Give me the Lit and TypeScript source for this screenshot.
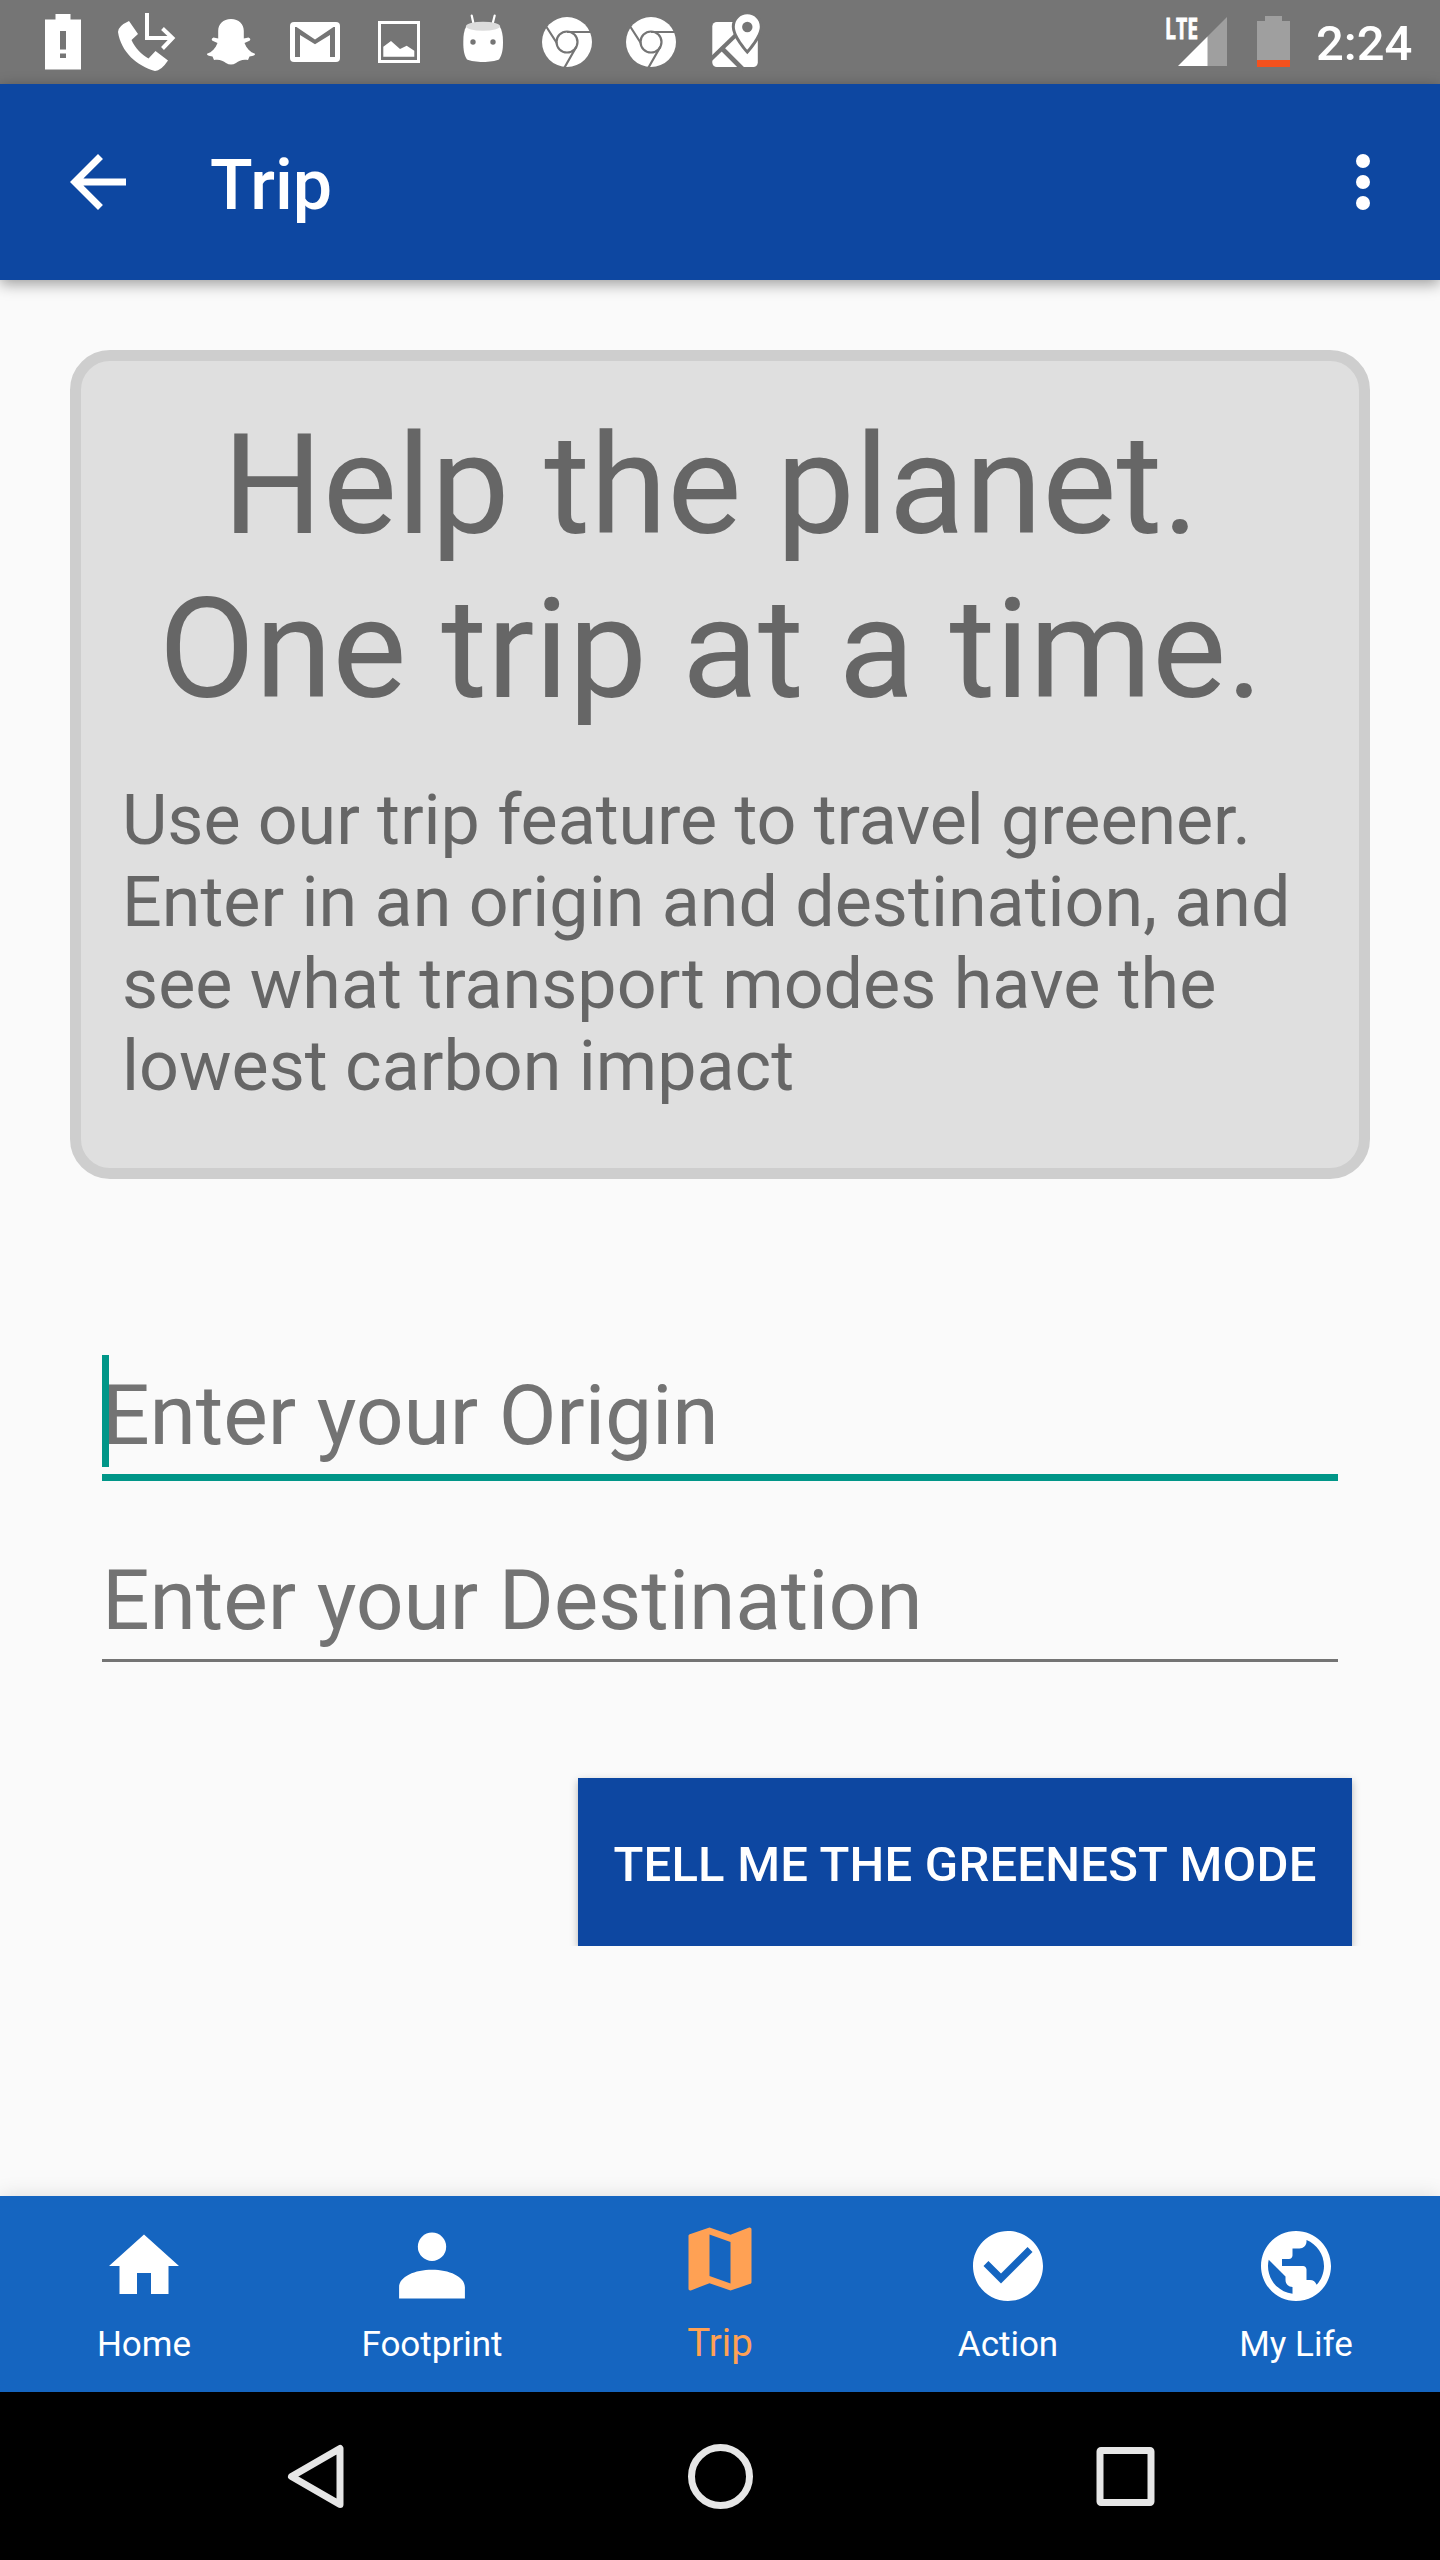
import { LitElement, html, css, svg } from "lit";
import { customElement, property } from "lit/decorators.js";
import { classMap } from "lit/directives/class-map.js";

const statusIcons = [
  svg`<path fill="#fff" d="M24 19.500h10.500V14h15v5.500H60v50H24z"/><path fill="#757575" d="M39 31h6v18.500h-6zM39 53.500h6V58h-6z"/>`,
  svg`<path fill="#fff" d="M24 21Q13 26 13 32C16 52 32 66 50 71Q56 71 63 60.500L50.500 51 43.500 58.500C37 55 30 48 26.500 40L33 34z"/><path fill="none" stroke="#fff" stroke-width="4" d="M42 13v25h25M57.500 28.500L67.500 38 57.500 48.500"/>`,
  svg`<path fill="#fff" d="M42 19C50 19 54.800 24 54.800 31V38.500L59.500 37.500Q62.500 39 60.500 40.800L55.500 43C57.500 48.500 61 52 66 53.800Q66.500 55.800 60.500 56.500L59 60C54 59 50 60.500 47 63Q42 66 37 63C34 60.500 30 59 25 60L23.500 56.500Q17.500 55.800 18 53.800C23 52 26.500 48.500 28.500 43L23.500 40.800Q21.500 39 24.500 37.500L29.200 38.500V31C29.200 24 34 19 42 19z"/>`,
  svg`<rect x="17" y="22" width="50" height="40" rx="4" fill="#fff"/><path fill="#757575" d="M22 57V27h1.500L42 39.500 60.500 27H62v30h-5V35L42 44.300 27 35v22z"/>`,
  svg`<rect x="22.500" y="22.500" width="39" height="39" fill="none" stroke="#fff" stroke-width="3"/><path fill="#fff" d="M26.300 46.700L34 41 43 49 49.700 45.700 57.300 50.700V56.700H26.300z"/>`,
  svg`<path stroke="#fff" stroke-width="2.200" stroke-linecap="round" d="M30.700 15.500L32.800 25M53.700 15.500L51.300 25"/><path fill="#fff" d="M25.500 26C33 22 51 22 58.500 26C61 30 62 35 62 42C62 50 61 55 58 59.500C51 62.800 33 62.800 26 59.500C23 55 22.300 50 22.300 42C22.300 35 23 30 25.500 26z"/><ellipse cx="42" cy="26.300" rx="17" ry="4.500" fill="#dcdcdc"/><circle cx="32" cy="42" r="2.700" fill="#757575"/><circle cx="52" cy="42" r="2.700" fill="#757575"/>`,
  svg`<circle cx="42" cy="42" r="25" fill="#fff"/><circle cx="42" cy="42" r="10.500" fill="none" stroke="#757575" stroke-width="2.200"/><path stroke="#757575" stroke-width="2.200" d="M42 32h25M21.500 27L31.800 43M51.500 46.500L39.500 67.500"/>`,
  svg`<circle cx="42" cy="42" r="25" fill="#fff"/><circle cx="42" cy="42" r="10.500" fill="none" stroke="#757575" stroke-width="2.200"/><path stroke="#757575" stroke-width="2.200" d="M42 32h25M21.500 27L31.800 43M51.500 46.500L39.500 67.500"/>`,
  svg`<rect x="19.300" y="22" width="45.500" height="45" rx="4.500" fill="#fff"/><path stroke="#757575" stroke-width="4" d="M17 60L46 32"/><path stroke="#757575" stroke-width="4.600" d="M28 47.500L50 69.500"/><path fill="#fff" stroke="#757575" stroke-width="6" paint-order="stroke" d="M54.300 14.300c-7 0-12.500 5.500-12.500 12.500 0 9 12.500 23 12.500 23s12.500-14 12.500-23c0-7-5.500-12.500-12.500-12.500z"/><circle cx="54.300" cy="27" r="5.200" fill="#757575"/>`,
];

interface Tab {
  label: string;
  active?: boolean;
  icon: unknown;
}

const tabs: Tab[] = [
  { label: "Home", icon: svg`<path d="M10 20v-6h4v6h5v-8h3L12 3 2 12h3v8z"/>` },
  {
    label: "Footprint",
    icon: svg`<circle cx="12" cy="6.500" r="4.050"/><path d="M12 13.050c-4.800 0-9.400 1.900-9.400 5v3.200h18.800v-3.200c0-3.100-4.600-5-9.400-5z"/>`,
  },
  {
    label: "Trip",
    active: true,
    icon: svg`<path d="M20.500 3l-.16.03L15 5.100 9 3 3.360 4.900c-.21.07-.36.25-.36.48V20.500c0 .28.22.5.5.5l.16-.03L9 18.900l6 2.100 5.640-1.900c.21-.07.36-.25.36-.48V3.500c0-.28-.22-.5-.5-.5zM15 19l-6-2.110V5l6 2.110V19z"/>`,
  },
  {
    label: "Action",
    icon: svg`<path d="M12 2C6.480 2 2 6.480 2 12s4.480 10 10 10 10-4.480 10-10S17.520 2 12 2zm-2 15l-5-5 1.410-1.410L10 14.170l7.590-7.590L19 8l-9 9z"/>`,
  },
  {
    label: "My Life",
    icon: svg`<path d="M12 2C6.480 2 2 6.480 2 12s4.480 10 10 10 10-4.480 10-10S17.520 2 12 2zm-1 17.930c-3.950-.49-7-3.850-7-7.930 0-.62.08-1.210.21-1.790L9 15v1c0 1.100.9 2 2 2v1.930zm6.900-2.540c-.26-.81-1-1.390-1.900-1.390h-1v-3c0-.55-.45-1-1-1H8v-2h2c.55 0 1-.45 1-1V7h2c1.100 0 2-.9 2-2v-.41c2.930 1.190 5 4.060 5 7.410 0 2.080-.8 3.970-2.100 5.390z"/>`,
  },
];

@customElement("status-bar")
export class StatusBar extends LitElement {
  static styles = css`
    :host {
      display: flex;
      height: 84px;
      background: #757575;
      color: #fff;
      padding-left: 21px;
      box-sizing: border-box;
    }
    .icons {
      display: flex;
      flex: 1;
    }
    svg {
      display: block;
      flex: none;
    }
    .lte {
      font: 700 29px/29px "Open Sans", "Roboto", sans-serif;
      stroke: #fff;
      stroke-width: 0.8px;
    }
    .time {
      width: 125px;
      padding-left: 1px;
      box-sizing: border-box;
      font-size: 49px;
      font-weight: 500;
      line-height: 88px;
      white-space: nowrap;
    }
  `;

  render() {
    return html`
      <div class="icons">
        ${statusIcons.map((icon) => html`<svg width="84" height="84" viewBox="0 0 84 84">${icon}</svg>`)}
      </div>
      <svg width="165" height="84" viewBox="0 0 165 84">
        <text class="lte" x="15" y="39" fill="#fff" textLength="33" lengthAdjust="spacingAndGlyphs">LTE</text>
        <path fill="#9f9f9f" d="M77 17V66H57V37z" />
        <path fill="#fff" d="M57.500 36.500V66H28z" />
        <path fill="#9f9f9f" d="M107 21h8v-5h17v5h8v46h-33z" />
        <path fill="#f4511e" d="M107 60h33v7h-33z" />
      </svg>
      <div class="time">2:24</div>
    `;
  }
}

@customElement("app-bar")
export class AppBar extends LitElement {
  static styles = css`
    :host {
      display: flex;
      align-items: center;
      height: 196px;
      padding: 0 35px 0 56px;
      box-sizing: border-box;
      background: #0d47a1;
      color: #fff;
      box-shadow: 0 4px 14px rgba(0, 0, 0, 0.38);
      z-index: 1;
    }
    svg {
      fill: #fff;
      flex: none;
    }
    .title {
      flex: 1;
      margin-left: 70px;
      padding-top: 6px;
      font-size: 70px;
      font-weight: 500;
      line-height: 82px;
    }
  `;

  render() {
    return html`
      <svg width="84" height="84" viewBox="0 0 24 24">
        <path d="M20 11H7.830l5.590-5.590L12 4l-8 8 8 8 1.410-1.410L7.830 13H20v-2z" />
      </svg>
      <div class="title">Trip</div>
      <svg width="84" height="84" viewBox="0 0 24 24">
        <circle cx="12" cy="6" r="2" />
        <circle cx="12" cy="12" r="2" />
        <circle cx="12" cy="18" r="2" />
      </svg>
    `;
  }
}

@customElement("text-field")
export class TextField extends LitElement {
  @property() hint = "";
  @property({ type: Boolean, reflect: true }) focused = false;

  static styles = css`
    :host {
      display: block;
      position: relative;
      box-sizing: border-box;
      height: 127px;
      border-bottom: 3px solid #747474;
      color: #737373;
      font-size: 84px;
      line-height: 98px;
      letter-spacing: -0.13px;
      padding-top: 17px;
      white-space: nowrap;
    }
    :host([focused]) {
      border-bottom: 7px solid #009688;
      height: 131px;
    }
    .cursor {
      position: absolute;
      left: 0;
      top: 5px;
      width: 7px;
      height: 112px;
      background: #009688;
    }
  `;

  render() {
    return html`${this.hint}${this.focused ? html`<span class="cursor"></span>` : null}`;
  }
}

@customElement("tab-bar")
export class TabBar extends LitElement {
  static styles = css`
    :host {
      display: flex;
      height: 196px;
      background: #1565c0;
      color: #fff;
      box-shadow: 0 0 20px rgba(0, 0, 0, 0.12);
      z-index: 1;
    }
    .tab {
      flex: 1;
      display: flex;
      flex-direction: column;
      align-items: center;
      padding-top: 28px;
      font-size: 35px;
      line-height: 42px;
    }
    .tab svg {
      fill: currentColor;
      display: block;
      margin-bottom: 16px;
    }
    .tab.active {
      padding-top: 21px;
      color: #ffa154;
      font-size: 38.500px;
      line-height: 46px;
    }
    .tab.active svg {
      margin-bottom: 19px;
    }
  `;

  render() {
    return html`${tabs.map(
      (tab) => html`
        <div class=${classMap({ tab: true, active: !!tab.active })}>
          <svg width="84" height="84" viewBox="0 0 24 24">${tab.icon}</svg>
          <span>${tab.label}</span>
        </div>
      `
    )}`;
  }
}

@customElement("system-nav")
export class SystemNav extends LitElement {
  static styles = css`
    :host {
      display: flex;
      justify-content: center;
      gap: 321px;
      height: 168px;
      background: #000;
    }
    svg {
      fill: none;
      stroke: #e6e6e6;
      stroke-width: 7;
      stroke-linejoin: round;
    }
  `;

  render() {
    return html`
      <svg width="84" height="168" viewBox="0 0 84 168"><path d="M67 56.500V112.500L18.500 84.500z" /></svg>
      <svg width="84" height="168" viewBox="0 0 84 168"><circle cx="42.500" cy="84.500" r="29" /></svg>
      <svg width="84" height="168" viewBox="0 0 84 168"><rect x="17" y="58.500" width="51" height="52" rx="1" /></svg>
    `;
  }
}

@customElement("app-root")
export class AppRoot extends LitElement {
  static styles = css`
    :host {
      display: flex;
      flex-direction: column;
      width: 1440px;
      height: 2560px;
      overflow: hidden;
      background: #fafafa;
      font-family: Roboto, sans-serif;
    }
    main {
      flex: 1;
      display: flex;
      flex-direction: column;
      padding: 70px 70px 0;
    }
    .card {
      box-sizing: border-box;
      height: 829px;
      border: 11px solid #cecece;
      border-radius: 40px;
      background: #dfdfdf;
      color: #666;
      padding: 42px 41px 0;
      white-space: nowrap;
    }
    h1 {
      margin: 0 18px 48px 0;
      font-size: 140px;
      font-weight: 400;
      line-height: 164px;
      text-align: center;
    }
    p {
      margin: 0;
      font-size: 70px;
      line-height: 82px;
    }
    .lead {
      letter-spacing: -0.06px;
    }
    form {
      display: flex;
      flex-direction: column;
      padding: 171px 32px 0;
      gap: 54px;
    }
    button {
      align-self: flex-end;
      width: 774px;
      height: 168px;
      margin: 62px -14px 0 0;
      padding: 4px 0 0;
      border: 0;
      background: #0d47a1;
      color: #fff;
      font: 500 49px Roboto, sans-serif;
      letter-spacing: 0.22px;
      text-transform: uppercase;
      white-space: nowrap;
      box-shadow: 0 3px 8px rgba(0, 0, 0, 0.28);
      clip-path: inset(-20px -20px 0 -20px);
    }
  `;

  render() {
    return html`
      <status-bar></status-bar>
      <app-bar></app-bar>
      <main>
        <section class="card">
          <h1>Help the planet.<br />One trip at a time.</h1>
          <p>
            <span class="lead">Use our trip feature to travel greener.</span><br />Enter in an origin and destination,
            and<br />see what transport modes have the<br />lowest carbon impact
          </p>
        </section>
        <form>
          <text-field hint="Enter your Origin" focused></text-field>
          <text-field hint="Enter your Destination"></text-field>
          <button type="button">Tell me the greenest mode</button>
        </form>
      </main>
      <tab-bar></tab-bar>
      <system-nav></system-nav>
    `;
  }
}
